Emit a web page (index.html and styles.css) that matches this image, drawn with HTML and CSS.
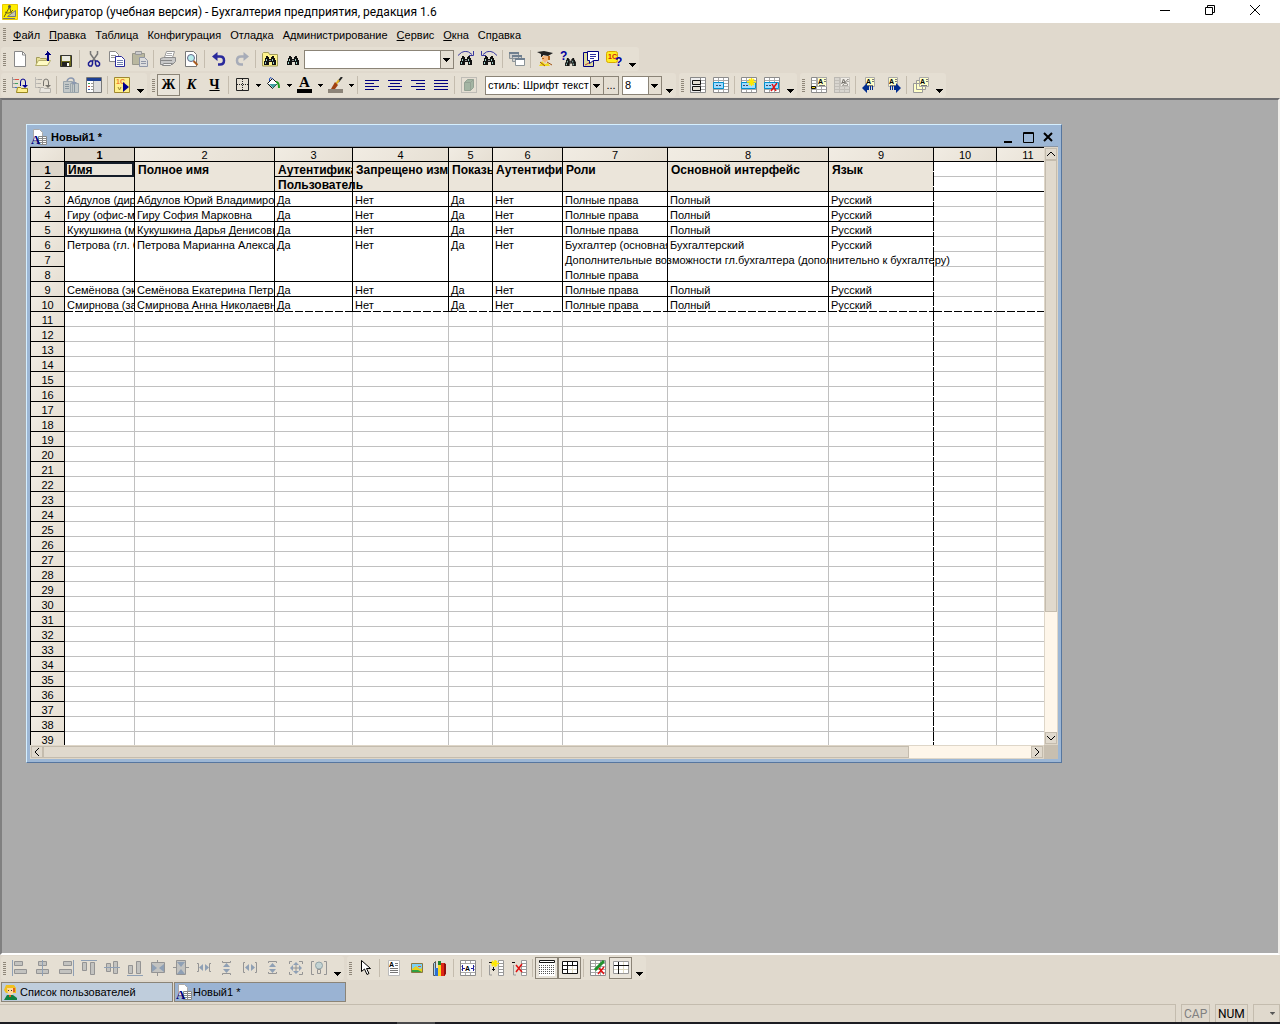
FILE: index.html
```
<!DOCTYPE html>
<html lang="ru">
<head>
    <meta charset="UTF-8">
    <meta name="viewport" content="width=device-width, initial-scale=1.0">
    <title>Конфигуратор (учебная версия)</title>
    <link rel="stylesheet" href="styles.css">
</head>
<body>
    <!-- Shared icon parts -->
    <svg class="defs" aria-hidden="true">
        <symbol id="bino" viewBox="0 0 12 10">
            <path fill="#111" d="M2 0h2v1h1v2h2V1h1V0h2v2h1v2h1v5H8V6H5v3H0V5h1V2h1z"/>
            <path fill="#9fd0c8" d="M2 3h1v2H2zM8 3h1v2H8zM1 6h1v2H1zM9 6h1v2H9z"/>
            <path fill="#888" d="M5 4h2v1H5z"/>
        </symbol>
        <symbol id="table" viewBox="0 0 16 16">
            <path fill="#fff" stroke="#8c8c8c" d="M.5.5h15v15H.5z"/>
            <path fill="none" stroke="#a8a8a8" d="M1 3.500h14M1 6.500h14M1 9.500h14M1 12.500h14M5.500 1v14M10.500 1v14"/>
        </symbol>
        <symbol id="note" viewBox="0 0 10 10">
            <path fill="#ffffc8" stroke="#aaa" d="M.5.5h9v9h-9z"/>
            <text x="1" y="7" class="tiny">A</text>
            <path fill="#777" d="M7 2h2v1H7zM7 4h2v1H7zM2 8h6v1H2z"/>
        </symbol>
        <symbol id="sheet" viewBox="0 0 16 16">
            <path fill="#fff" stroke="#aaa" d="M2.500.5h6l3 3v9h-9z"/>
            <path fill="#fff" stroke="#888" d="M7.500 7.500h8v8h-8zM7 9.500h9M7 11.500h9M7 13.500h9M11.500 8v8"/>
            <text x="0" y="15" class="serif" fill="#00007c">A</text>
        </symbol>
        <symbol id="drop" viewBox="0 0 7 4"><path d="M0 0h7v1H6v1H5v1H4v1H3V3H2V2H1V1H0z"/></symbol>
        <symbol id="tree" viewBox="0 0 16 16">
            <path fill="none" stroke="#999" d="M.5 0v11M1 2.500h2M1 6.500h2M1 10.500h2"/>
            <path fill="none" stroke="#e05040" d="M3 2.500h4"/><path fill="none" stroke="#40a060" d="M3 6.500h3"/><path fill="none" stroke="#4070d0" d="M3 10.500h2"/>
            <path fill="#ffef8c" stroke="#998820" d="M4.500 15.500l1-5h3l1 1h6v4z"/>
            <path fill="none" stroke="#000090" d="M8.500 9V5q0-3 2.500-3t2.500 3v4"/><path fill="#000090" d="M10 8h6l-3 3z"/>
        </symbol>
    </svg>

    <header class="titlebar">
        <svg class="logo" viewBox="0 0 16 16"><path fill="#ffef00" stroke="#e8c800" d="M.5.5h15v15H.5z"/><path fill="none" stroke="#665c18" d="M2 13L7.500 3l3 10M3 8q4 3 8-2"/><path fill="#c9c9b0" stroke="#777" d="M5.500 12.500l8-6v6zM1 14.500h12"/><circle cx="7.500" cy="2.500" r="1.500" fill="#555"/></svg>
        <h1>Конфигуратор (учебная версия) - Бухгалтерия предприятия, редакция 1.6</h1>
        <button class="sys" aria-label="Свернуть"><svg viewBox="0 0 10 10"><path d="M0 5.500h10"/></svg></button>
        <button class="sys" aria-label="Восстановить"><svg viewBox="0 0 10 10"><path d="M.5 2.500h7v7h-7zM2.500 2V.5h7v7H8"/></svg></button>
        <button class="sys" aria-label="Закрыть"><svg viewBox="0 0 10 10"><path d="M0 0l10 10M10 0L0 10"/></svg></button>
    </header>

    <nav class="menubar">
        <span class="grip"></span>
        <button><u>Ф</u>айл</button>
        <button><u>П</u>равка</button>
        <button>Таблица</button>
        <button>Конфигурация</button>
        <button>Отладка</button>
        <button>Администрирование</button>
        <button><u>С</u>ервис</button>
        <button><u>О</u>кна</button>
        <button>Сп<u>р</u>авка</button>
    </nav>

    <div class="toolrow">
        <div class="toolbar">
            <span class="grip"></span>
            <button aria-label="Новый"><svg class="ic" viewBox="0 0 16 16"><path fill="#fff" stroke="#888" d="M2.500.5h8l3 3v12h-11z"/><path fill="none" stroke="#888" d="M10.500 1v3h3"/></svg></button>
            <button aria-label="Открыть"><svg class="ic" viewBox="0 0 16 16"><path fill="#e6df96" stroke="#a39c5a" d="M1.500 14.500v-8h3l1 1h6v7z"/><path fill="#fffbc4" stroke="#b5ae6c" d="M.5 14.500l3-5h12l-3 5z"/><path fill="#000080" d="M12 0h1v1h1v1h1v1h1v1h-2v6h-2V4h-2V3h1V2h1V1z"/></svg></button>
            <button aria-label="Сохранить"><svg class="ic" viewBox="0 0 16 16"><path fill="#6e6b1e" stroke="#333" d="M2.500 4.500h11v11h-11z"/><path fill="#e9e9e0" d="M4 5h8v5H4z"/><path fill="#222" d="M4 11h7v4H4z"/><path fill="#fff" d="M9 12h2v3H9z"/></svg></button>
            <span class="sep"></span>
            <button aria-label="Вырезать"><svg class="ic" viewBox="0 0 16 16"><path fill="none" stroke="#777" stroke-width="1.500" d="M4.500 0v3l5 7M11.500 0v3l-5 7"/><path fill="none" stroke="#1a1a90" stroke-width="1.500" d="M6.500 10l-2 0-2 2v2l1 1h2l1-2zM9.500 10h2l2 2v2l-1 1h-2l-1-2z"/></svg></button>
            <button aria-label="Копировать"><svg class="ic" viewBox="0 0 16 16"><path fill="#fff" stroke="#888" d="M.5.5h6l3 3v7h-9z"/><path stroke="#999" d="M2 4.500h5M2 6.500h5"/><path fill="#fff" stroke="#2a2a9c" d="M6.500 5.500h6l3 3v7h-9z"/><path stroke="#7080b0" d="M8 9.500h6M8 11.500h6M8 13.500h6"/></svg></button>
            <button aria-label="Вставить"><svg class="ic" viewBox="0 0 16 16"><path fill="#b9b79f" stroke="#98978a" d="M.5 2.500h12v11H.5z"/><path fill="#ccc" stroke="#999" d="M3.500.5h6v3h-6z"/><path fill="#ddd" stroke="#9097a8" d="M7.500 6.500h5l3 3v6h-8z"/><path stroke="#9097a8" d="M9 10.500h5M9 12.500h5"/></svg></button>
            <span class="sep"></span>
            <button aria-label="Печать"><svg class="ic" viewBox="0 0 16 16"><path fill="#fff" stroke="#999" d="M4.500 6.500l2-6h8l-2 6z"/><path stroke="#aaa" d="M7 2.500h5M6 4.500h6"/><path fill="#c8c8c8" stroke="#8c8c8c" d="M.5 7.500l3-1h12v4l-3 3H.5z"/><path fill="#eee" stroke="#888" d="M1 9.500h11M3.500 12.500h9l-2 2h-8z"/></svg></button>
            <button aria-label="Просмотр"><svg class="ic" viewBox="0 0 16 16"><path fill="#fff" stroke="#777" d="M2.500.5h8l3 3v12h-11z"/><circle cx="8" cy="7" r="3.500" fill="#b8eeee" stroke="#668"/><path stroke="#a85b20" stroke-width="2" d="M10.500 10l4 4"/></svg></button>
            <span class="sep"></span>
            <button aria-label="Отменить"><svg class="ic" viewBox="0 0 16 16"><path fill="none" stroke="#2a2a9c" stroke-width="2.500" d="M4 5.500h5q4 0 4 4t-4 4H7"/><path fill="#2a2a9c" d="M1 5.500L6.500 1v9z"/></svg></button>
            <button aria-label="Вернуть"><svg class="ic" viewBox="0 0 16 16"><path fill="none" stroke="#a7acb8" stroke-width="2.500" d="M12 5.500H7q-4 0-4 4t4 4h2"/><path fill="#a7acb8" d="M15 5.500L9.500 1v9z"/></svg></button>
            <span class="sep"></span>
            <button aria-label="Глобальный поиск"><svg class="ic" viewBox="0 0 16 16"><path fill="#fff48c" stroke="#a39c5a" d="M.5 15V2.500l1-1h5l1 2h8V15z"/><use href="#bino" x="2" y="5" width="12" height="10"/></svg></button>
            <button aria-label="Найти"><svg class="ic" viewBox="0 0 16 16"><use href="#bino" x="2" y="5" width="12" height="10"/></svg></button>
            <select class="find" aria-label="Строка поиска"><option></option></select>
            <button aria-label="Найти далее"><svg class="ic" viewBox="0 0 16 16"><path fill="none" stroke="#3838a0" d="M0 4.500q7-8 14-1M15.500 0v4.500H11"/><use href="#bino" x="2" y="5" width="12" height="10"/></svg></button>
            <button aria-label="Найти назад"><svg class="ic" viewBox="0 0 16 16"><path fill="none" stroke="#3838a0" d="M16 4.500q-7-8-14-1M.5 0v4.500H5"/><use href="#bino" x="2" y="5" width="12" height="10"/></svg></button>
            <span class="sep"></span>
            <button aria-label="Окна"><svg class="ic" viewBox="0 0 16 16"><path fill="#d0d0d0" stroke="#8c9498" d="M.5 1.500h9v6h-9zM3.500 4.500h9v6h-9z"/><path fill="#708090" d="M0 1h10v2H0zM3 4h10v2H3z"/><path fill="#fff" stroke="#8c9498" d="M6.500 7.500h9v7h-9z"/><path fill="#708090" d="M6 7h10v2H6z"/></svg></button>
            <span class="sep"></span>
            <button aria-label="Синтакс-помощник"><svg class="ic" viewBox="0 0 16 16"><path fill="#222" d="M0 1l7-1 9 2-5 3-5-1v2H4V3z"/><path fill="#f5b880" d="M5 5h6v4l-3 3-3-3z"/><path fill="#b56820" d="M11 5h2v4h-2zM5 7h2v1H5z"/><path fill="#f0d820" d="M2 15l3-5 3 3 3-1 2 3z"/><path stroke="#a05010" d="M10 11l5 3M3 11l5 4"/></svg></button>
            <button aria-label="Поиск в справке"><svg class="ic" viewBox="0 0 16 16"><text x="0" y="9" class="mark">?</text><use href="#bino" x="5" y="7" width="11" height="9"/></svg></button>
            <button aria-label="Содержание справки"><svg class="ic" viewBox="0 0 16 16"><path fill="#dedb9a" stroke="#000080" d="M.5 1.500h10v14H.5z"/><path fill="#fff" stroke="#000080" d="M4.500.5h11v9h-5l-4 3v-3h-2z"/><path stroke="#3030a0" d="M7 3.500h6M7 5.500h6M7 7.500h4"/><path fill="none" stroke="#c04040" d="M2 14l4-2"/></svg></button>
            <button aria-label="О программе"><svg class="ic" viewBox="0 0 16 16"><rect x=".5" y=".5" width="11" height="11" rx="2" fill="#ffee20" stroke="#d8a800"/><text x="2" y="8" class="tiny" fill="#d02010">1С</text><text x="9" y="15" class="mark">?</text></svg></button>
            <button class="more" aria-label="Ещё"><svg viewBox="0 0 7 4"><use href="#drop"/></svg></button>
        </div>
    </div>

    <div class="toolrow">
        <div class="toolbar">
            <span class="grip"></span>
            <button aria-label="Открыть конфигурацию"><svg class="ic" viewBox="0 0 16 16"><use href="#tree"/></svg></button>
            <button aria-label="Закрыть конфигурацию"><svg class="ic dim" viewBox="0 0 16 16"><use href="#tree"/></svg></button>
            <span class="sep"></span>
            <button aria-label="Обновить базу"><svg class="ic" viewBox="0 0 16 16"><path fill="#c3c8c8" stroke="#9ba5ab" d="M.5 4.500h9v11h-9zM7.500 6.500h8v9h-8z"/><path stroke="#8b98a0" d="M2 7.500h4M2 9.500h4M2 11.500h4M11.500 7v8"/><path fill="none" stroke="#8b98b0" stroke-width="1.500" d="M4 4Q5 1 8 1t3 3v3"/><path fill="#8b98b0" d="M8 5h6l-3 3z"/></svg></button>
            <button aria-label="Окно конфигурации"><svg class="ic" viewBox="0 0 16 16"><path fill="#fff" stroke="#777" d="M.5.5h15v15H.5z"/><path fill="#1c3f94" d="M1 1h14v3H1z"/><path fill="#ddd" d="M8 4h7v11H8z"/><path stroke="#30a050" d="M2 6.500h2"/><path stroke="#d04040" d="M2 9.500h2"/><path stroke="#3060c0" d="M2 12.500h2"/><path stroke="#999" d="M5 6.500h2M5 9.500h2M5 12.500h2M7.500 4v11"/></svg></button>
            <span class="sep"></span>
            <button aria-label="Начать отладку"><svg class="ic" viewBox="0 0 16 16"><path fill="#fff08c" stroke="#a08830" d="M.5.5h15v15H.5z"/><text x="2" y="7" class="tiny" fill="#f08030">1С</text><path fill="none" stroke="#a08830" d="M4 10l1.500 3L7 10"/><path fill="#000090" d="M9 5l6 5-6 5z"/></svg></button>
            <button class="more" aria-label="Ещё"><svg viewBox="0 0 7 4"><use href="#drop"/></svg></button>
        </div>
        <div class="toolbar">
            <span class="grip"></span>
            <button class="letter on" aria-label="Жирный"><b>Ж</b></button>
            <button class="letter" aria-label="Курсив"><i>К</i></button>
            <button class="letter" aria-label="Подчёркнутый"><u>Ч</u></button>
            <span class="sep"></span>
            <button aria-label="Границы"><svg class="ic" viewBox="0 0 16 16"><path fill="none" stroke="#222" d="M1.500 1.500h12v12h-12z"/><path stroke="#222" stroke-dasharray="1 1" d="M7.500 2v11M2 7.500h11"/></svg></button>
            <button class="arrow" aria-label="Выбор границ"><svg viewBox="0 0 7 4"><use href="#drop"/></svg></button>
            <button aria-label="Цвет фона"><svg class="ic" viewBox="0 0 16 16"><path fill="#fff" stroke="#111" d="M1.500 6.500l5-5 5 5-5 5z"/><path fill="#40a0a0" d="M3 7h8l-4 4z"/><path fill="none" stroke="#2050c0" d="M3.500 4V1.500L5 .5l2 2"/><path fill="none" stroke="#20a020" stroke-width="2" d="M10 5q3 0 3 6"/></svg></button>
            <button class="arrow" aria-label="Выбор цвета фона"><svg viewBox="0 0 7 4"><use href="#drop"/></svg></button>
            <button aria-label="Цвет текста"><svg class="ic" viewBox="0 0 16 16"><text x="2" y="10" class="serif big">A</text><path d="M0 12h15v4H0z"/></svg></button>
            <button class="arrow" aria-label="Выбор цвета текста"><svg viewBox="0 0 7 4"><use href="#drop"/></svg></button>
            <button aria-label="Цвет рамки"><svg class="ic" viewBox="0 0 16 16"><path fill="#8c8479" d="M0 12h15v4H0z"/><path stroke="#222" stroke-width="2" d="M14 0l-4 5"/><path stroke="#e0b020" stroke-width="2" d="M11 3L8 7"/><path fill="#a04010" d="M7 5l3 3-3 4H3z"/></svg></button>
            <button class="arrow" aria-label="Выбор цвета рамки"><svg viewBox="0 0 7 4"><use href="#drop"/></svg></button>
            <span class="sep"></span>
            <button aria-label="По левому краю"><svg class="ic lines" viewBox="0 0 16 16"><path d="M1 3.500h14M1 6.500h9M1 9.500h14M1 12.500h9"/></svg></button>
            <button aria-label="По центру"><svg class="ic lines" viewBox="0 0 16 16"><path d="M1 3.500h14M3 6.500h10M1 9.500h14M3 12.500h10"/></svg></button>
            <button aria-label="По правому краю"><svg class="ic lines" viewBox="0 0 16 16"><path d="M1 3.500h14M6 6.500h9M1 9.500h14M6 12.500h9"/></svg></button>
            <button aria-label="По ширине"><svg class="ic lines" viewBox="0 0 16 16"><path d="M1 3.500h14M1 6.500h14M1 9.500h14M1 12.500h14"/></svg></button>
            <span class="sep"></span>
            <button aria-label="Объект"><svg class="ic" viewBox="0 0 16 16"><path fill="none" stroke="#999" stroke-dasharray="1 1" d="M.5.5h15v15H.5z"/><path fill="#a3b5a3" stroke="#94a294" d="M3.500 5.500l3-3h6v8l-3 3h-6zM3.500 5.500h6v8M9.500 5.500l3-3"/></svg></button>
            <select class="style" aria-label="Шрифт"><option>стиль: Шрифт текст</option></select>
            <button class="dots" aria-label="Выбрать шрифт">...</button>
            <select class="size" aria-label="Размер"><option>8</option></select>
            <button class="more" aria-label="Ещё"><svg viewBox="0 0 7 4"><use href="#drop"/></svg></button>
        </div>
        <div class="toolbar">
            <span class="grip"></span>
            <button aria-label="Объединить"><svg class="ic" viewBox="0 0 16 16"><use href="#table"/><path fill="#eee" stroke="#888" d="M.5.5h10v15H.5z"/><path fill="#e5dfd3" stroke="#111" d="M2.500 3.500h8v4h-8zM2.500 9.500h8v4h-8z"/></svg></button>
            <button aria-label="Имя области"><svg class="ic" viewBox="0 0 16 16"><use href="#table"/><path fill="#a0dcff" stroke="#0090d0" d="M.5 5.500h10v6H.5z"/><path stroke="#446" stroke-dasharray="2 1" d="M3 8.500h5"/></svg></button>
            <span class="sep"></span>
            <button aria-label="Добавить область"><svg class="ic" viewBox="0 0 16 16"><use href="#table"/><path fill="#a0dcff" stroke="#0090d0" d="M.5 5.500h14v6H.5z"/><path stroke="#446" stroke-dasharray="2 1" d="M2 8.500h6"/><path stroke="#ffe800" stroke-width="1.500" d="M10.500 1v8M6 5h9M8 2l5 6M13 2L8 8"/></svg></button>
            <button aria-label="Удалить область"><svg class="ic" viewBox="0 0 16 16"><use href="#table"/><path fill="#a0dcff" stroke="#0090d0" d="M.5 5.500h14v6H.5z"/><path stroke="#446" stroke-dasharray="2 1" d="M2 8.500h6"/><path stroke="#e01010" stroke-width="1.500" d="M8 7l4 7M13 6l-6 8"/></svg></button>
            <button class="more" aria-label="Ещё"><svg viewBox="0 0 7 4"><use href="#drop"/></svg></button>
        </div>
        <div class="toolbar">
            <span class="grip"></span>
            <button aria-label="Примечание"><svg class="ic" viewBox="0 0 16 16"><use href="#table"/><use href="#note" x="6" y="0" width="10" height="10"/><path fill="#f8e020" stroke="#111" d="M.5 9.500h4v2h-4z"/></svg></button>
            <button aria-label="Удалить примечание"><svg class="ic dim" viewBox="0 0 16 16"><path fill="#999" d="M0 0h16v16H0z"/><use href="#table" opacity=".5"/><use href="#note" x="6" y="0" width="10" height="10"/><path stroke="#a02020" d="M9 2l5 6M14 2L9 8"/></svg></button>
            <span class="sep"></span>
            <button aria-label="Предыдущее примечание"><svg class="ic" viewBox="0 0 16 16"><use href="#note" x="3" y="0" width="10" height="10"/><path fill="#002d90" d="M0 11l5-5v3h2v4H5v3zM8 9h1v4H8zM10 9h1v4h-1z"/></svg></button>
            <button aria-label="Следующее примечание"><svg class="ic" viewBox="0 0 16 16"><use href="#note" x="3" y="0" width="10" height="10"/><path fill="#002d90" d="M16 11l-5-5v3H9v4h2v3zM5 9h1v4H5zM7 9h1v4H7z"/></svg></button>
            <span class="sep"></span>
            <button aria-label="Все примечания"><svg class="ic" viewBox="0 0 16 16"><path fill="#ffffc8" stroke="#999" d="M.5 6.500h9v9h-9zM3.500 3.500h9v9h-9z"/><use href="#note" x="6" y="0" width="10" height="10"/></svg></button>
            <button class="more" aria-label="Ещё"><svg viewBox="0 0 7 4"><use href="#drop"/></svg></button>
        </div>
    </div>

    <main class="workspace">
        <section class="window">
            <div class="caption">
                <svg class="ic" viewBox="0 0 16 16"><use href="#sheet"/></svg>
                <h2>Новый1 *</h2>
                <button aria-label="Свернуть окно"><svg viewBox="0 0 11 11"><path d="M1 10h8"/></svg></button>
                <button aria-label="Развернуть окно"><svg viewBox="0 0 11 11" class="thin"><path d="M.5.5h10v10H.5zM0 1.500h11"/></svg></button>
                <button aria-label="Закрыть окно"><svg viewBox="0 0 11 11"><path d="M1 1l8 8M9 1L1 9"/></svg></button>
            </div>
            <div class="pane">
                <table class="sheet">
                    <colgroup>
                        <col class="w35"><col class="w70"><col class="w140"><col class="w78"><col class="w96"><col class="w44">
                        <col class="w70"><col class="w105"><col class="w161"><col class="w105"><col class="w63"><col class="w63">
                    </colgroup>
                    <thead>
                        <tr><th></th><th class="cur">1</th><th>2</th><th>3</th><th>4</th><th>5</th><th>6</th><th>7</th><th>8</th><th>9</th><th>10</th><th>11</th></tr>
                    </thead>
                    <tbody id="rows">
                        <tr class="head"><th class="cur">1</th><td class="active">Имя</td><td>Полное имя</td><td class="line">Аутентификация</td><td>Запрещено изменять</td><td>Показывать</td><td>Аутентификация</td><td>Роли</td><td>Основной интерфейс</td><td>Язык</td><td></td><td></td></tr>
                        <tr class="head last"><th>2</th><td></td><td></td><td class="spill">Пользователь</td><td></td><td></td><td></td><td></td><td></td><td></td><td></td><td></td></tr>
                        <tr class="data"><th>3</th><td>Абдулов (директор)</td><td>Абдулов Юрий Владимирович</td><td>Да</td><td>Нет</td><td>Да</td><td>Нет</td><td>Полные права</td><td>Полный</td><td>Русский</td><td></td><td></td></tr>
                        <tr class="data"><th>4</th><td>Гиру (офис-менеджер)</td><td>Гиру София Марковна</td><td>Да</td><td>Нет</td><td>Да</td><td>Нет</td><td>Полные права</td><td>Полный</td><td>Русский</td><td></td><td></td></tr>
                        <tr class="data"><th>5</th><td>Кукушкина (менеджер)</td><td>Кукушкина Дарья Денисовна</td><td>Да</td><td>Нет</td><td>Да</td><td>Нет</td><td>Полные права</td><td>Полный</td><td>Русский</td><td></td><td></td></tr>
                        <tr class="data open"><th>6</th><td>Петрова (гл. бухгалтер)</td><td>Петрова Марианна Александровна</td><td>Да</td><td>Нет</td><td>Да</td><td>Нет</td><td>Бухгалтер (основная)</td><td>Бухгалтерский</td><td>Русский</td><td></td><td></td></tr>
                        <tr class="data open"><th>7</th><td></td><td></td><td></td><td></td><td></td><td></td><td class="spill">Дополнительные возможности гл.бухгалтера (дополнительно к бухгалтеру)</td><td></td><td></td><td></td><td></td></tr>
                        <tr class="data"><th>8</th><td></td><td></td><td></td><td></td><td></td><td></td><td>Полные права</td><td></td><td></td><td></td><td></td></tr>
                        <tr class="data"><th>9</th><td>Семёнова (экономист)</td><td>Семёнова Екатерина Петровна</td><td>Да</td><td>Нет</td><td>Да</td><td>Нет</td><td>Полные права</td><td>Полный</td><td>Русский</td><td></td><td></td></tr>
                        <tr class="data end"><th>10</th><td>Смирнова (зам.)</td><td>Смирнова Анна Николаевна</td><td>Да</td><td>Нет</td><td>Да</td><td>Нет</td><td>Полные права</td><td>Полный</td><td>Русский</td><td></td><td></td></tr>
                    </tbody>
                </table>
            </div>
            <div class="vscroll">
                <button aria-label="Вверх"><svg viewBox="0 0 8 8"><path d="M0 6l4-4 4 4"/></svg></button>
                <span class="thumb"></span>
                <span class="rest"></span>
                <button aria-label="Вниз"><svg viewBox="0 0 8 8"><path d="M0 2l4 4 4-4"/></svg></button>
            </div>
            <div class="hscroll">
                <button aria-label="Влево"><svg viewBox="0 0 8 8"><path d="M6 0L2 4l4 4"/></svg></button>
                <span class="thumb"></span>
                <span class="rest"></span>
                <button aria-label="Вправо"><svg viewBox="0 0 8 8"><path d="M2 0l4 4-4 4"/></svg></button>
            </div>
            <div class="corner"></div>
        </section>
    </main>

    <div class="toolrow">
        <div class="toolbar off">
            <span class="grip"></span>
            <button aria-label="Выровнять влево"><svg class="ic" viewBox="0 0 16 16"><path class="b" d="M.5 0v16"/><path d="M2.500 1.500h8v4h-8zM2.500 9.500h12v4h-12z"/></svg></button>
            <button aria-label="Выровнять по вертикальной оси"><svg class="ic" viewBox="0 0 16 16"><path d="M3.500 1.500h8v4h-8zM1.500 9.500h12v4h-12z"/><path class="b" d="M7.500 0v16"/></svg></button>
            <button aria-label="Выровнять вправо"><svg class="ic" viewBox="0 0 16 16"><path class="b" d="M15.500 0v16"/><path d="M5.500 1.500h8v4h-8zM1.500 9.500h12v4h-12z"/></svg></button>
            <button aria-label="Выровнять вверх"><svg class="ic" viewBox="0 0 16 16"><path class="b" d="M0 .5h16"/><path d="M1.500 2.500h4v8h-4zM9.500 2.500h4v12h-4z"/></svg></button>
            <button aria-label="Выровнять по горизонтальной оси"><svg class="ic" viewBox="0 0 16 16"><path d="M2.500 3.500h4v8h-4zM9.500 1.500h4v12h-4z"/><path class="b" d="M0 7.500h16"/></svg></button>
            <button aria-label="Выровнять вниз"><svg class="ic" viewBox="0 0 16 16"><path class="b" d="M0 15.500h16"/><path d="M1.500 5.500h4v8h-4zM9.500 1.500h4v12h-4z"/></svg></button>
            <button aria-label="Центрировать по горизонтали"><svg class="ic" viewBox="0 0 16 16"><path d="M1.500 2.500h13v10h-13zM7.500 0v2M7.500 13v3"/><path class="f" d="M2 4l5 4-5 4zM14 4L9 8l5 4z"/></svg></button>
            <button aria-label="Центрировать по вертикали"><svg class="ic" viewBox="0 0 16 16"><path d="M3.500.5h9v14h-9zM0 7.500h3M13 7.500h3"/><path class="f" d="M4 2h8L8 7zM4 14h8L8 9z"/></svg></button>
            <button aria-label="Промежутки по горизонтали"><svg class="ic" viewBox="0 0 16 16"><path class="n" d="M1 3.500h1.500v8H1M15 3.500h-1.500v8H15"/><path class="f" d="M3 7.500L7 4v7zM13 7.500L9 4v7z"/></svg></button>
            <button aria-label="Промежутки по вертикали"><svg class="ic" viewBox="0 0 16 16"><path class="n" d="M3.500 1v1.500h8V1M3.500 15v-1.500h8V15"/><path class="f" d="M7.500 3L11 7H4zM7.500 13L11 9H4z"/></svg></button>
            <button aria-label="Одинаковая ширина"><svg class="ic" viewBox="0 0 16 16"><path class="n" d="M3 2.500H1.500v10H3M13 2.500h1.500v10H13"/><path class="f" d="M3 7.500L7 4v7zM13 7.500L9 4v7z"/></svg></button>
            <button aria-label="Одинаковая высота"><svg class="ic" viewBox="0 0 16 16"><path class="n" d="M3.500 3V1.500h8V3M3.500 12v1.500h8V12"/><path class="f" d="M7.500 3L11 7H4zM7.500 13L11 9H4z"/></svg></button>
            <button aria-label="Одинаковый размер"><svg class="ic" viewBox="0 0 16 16"><path class="n" d="M4 1.500H1.500V4M11 1.500h3.500V4M4 14.500H1.500V12M11 14.500h3.500V12M8 3v10M3 8h10"/><path class="f" d="M8 2l3 3H5zM8 14l3-3H5zM2 8l3-3v6zM14 8l-3-3v6z"/></svg></button>
            <button aria-label="Авторазмер"><svg class="ic" viewBox="0 0 16 16"><path class="n" d="M3 1.500H.5v13H3M13 1.500h2.500v13H13"/><circle cx="8" cy="5.500" r="3.500" fill="#c3d3d3" stroke="#91a3a8"/><path class="n" d="M6.500 9.500h3v4h-3z"/></svg></button>
            <button class="more" aria-label="Ещё"><svg viewBox="0 0 7 4"><use href="#drop"/></svg></button>
        </div>
        <div class="toolbar">
            <span class="grip"></span>
            <button aria-label="Выделение"><svg class="ic" viewBox="0 0 16 16"><path fill="#fff" stroke="#000" d="M3.500.5v11l3-2.500 2.500 5.500 2-1-2.500-5h4z"/></svg></button>
            <span class="sep"></span>
            <button aria-label="Текст"><svg class="ic" viewBox="0 0 16 16"><path fill="#fff" stroke="#bbb" d="M2.500.5h11v15h-11z"/><text x="3" y="7" class="tiny">A</text><path stroke="#777" d="M9 3.500h3M9 5.500h3M4 8.500h8M4 10.500h8M4 12.500h8"/></svg></button>
            <button aria-label="Картинка"><svg class="ic" viewBox="0 0 16 16"><path fill="#78d0f8" stroke="#8a7840" d="M2.500 3.500h11v9h-11z"/><path fill="#e8d020" d="M3 9l4-3 4 3 2-1v4H3z"/><path fill="#30a040" d="M3 10h6l4 2H3z"/><path stroke="#e06020" d="M9 6.500h3"/></svg></button>
            <button aria-label="Диаграмма"><svg class="ic" viewBox="0 0 16 16"><path fill="#a0d0f0" stroke="#555" d="M1.500 3.500l2-2v14h-2z"/><path fill="#3070d0" d="M3 8h3v8H3z"/><path fill="#f8d820" d="M6 4h3v12H6z"/><path fill="#208030" d="M6 1h3v4H6z"/><path fill="#e02818" d="M9 3h4v13H9z"/><path fill="#901010" d="M12 3l2 1v10l-2 2z"/></svg></button>
            <span class="sep"></span>
            <button aria-label="Поле"><svg class="ic" viewBox="0 0 16 16"><use href="#table"/><path fill="#fff" d="M2 4h12v8H2z"/><path stroke="#2020a0" d="M2.500 5v6M13.500 5v6M3 8.500h2M11 8.500h2"/><text x="5" y="11" class="tiny">A</text></svg></button>
            <span class="sep"></span>
            <button aria-label="Добавить группу"><svg class="ic" viewBox="0 0 16 16"><path fill="#fff" stroke="#999" d="M10.500.5h5v15h-5zM10 3.500h6M10 6.500h6M10 9.500h6M10 12.500h6"/><path fill="none" stroke="#111" d="M1 2.500h3M5.500 7v4M4 9.500h3"/><path fill="none" stroke="#999" d="M1.500 5v10H4"/><path stroke="#ffe800" stroke-width="1.500" d="M7 0v7M3 3.500h8M4 1l5 5M9 1L4 6"/></svg></button>
            <button aria-label="Удалить группу"><svg class="ic" viewBox="0 0 16 16"><path fill="#fff" stroke="#999" d="M10.500.5h5v15h-5zM10 3.500h6M10 6.500h6M10 9.500h6M10 12.500h6"/><path fill="none" stroke="#111" d="M1 2.500h3"/><path fill="none" stroke="#999" d="M2.500 5v10H5"/><path stroke="#e01010" stroke-width="1.500" d="M5 5l6 7M11 4l-6 8"/></svg></button>
            <span class="sep"></span>
            <button class="on" aria-label="Сетка"><svg class="ic" viewBox="0 0 16 16"><path fill="#fff" d="M0 0h16v16H0z"/><path fill="#fff" stroke="#111" d="M.5.5h15v2H.5z"/><path stroke="#555" stroke-dasharray="1 1" d="M0 5.500h16M0 7.500h16M0 9.500h16M0 11.500h16M0 13.500h16"/></svg></button>
            <button class="on" aria-label="Заголовки"><svg class="ic" viewBox="0 0 16 16"><path fill="#fff" stroke="#111" d="M.5 1.500h15v12H.5zM.5 5.500h15M5.500 2v12M10.500 2v4M1 9.500h5"/><path stroke="#ddd8c0" d="M6 9.500h9M10.500 6v7"/></svg></button>
            <span class="sep"></span>
            <button aria-label="Только просмотр"><svg class="ic" viewBox="0 0 16 16"><use href="#table"/><path stroke="#20902c" stroke-width="3" d="M14 1L5 10"/><path stroke="#e01010" stroke-width="1.500" d="M9 8l5 6M14 7l-6 7"/></svg></button>
            <button class="on" aria-label="Фиксация"><svg class="ic" viewBox="0 0 16 16"><path fill="#fff" stroke="#999" d="M.5 1.500h15v12H.5z"/><path stroke="#ddd8c0" d="M1 9.500h14M10.500 2v11"/><path stroke="#111" d="M1 5.500h15M5.500 2v12"/></svg></button>
            <button class="more" aria-label="Ещё"><svg viewBox="0 0 7 4"><use href="#drop"/></svg></button>
        </div>
    </div>

    <div class="tabs">
        <button><svg class="ic" viewBox="0 0 16 16"><path fill="#f0c020" d="M3 1h8l2 3v5H3L1 6z"/><path fill="#ffd8a0" d="M4 4h6v6l-2 1-3-1z"/><path fill="#333" d="M5 6h1v1H5zM8 6h1v1H8z"/><path fill="#108040" d="M1 16l3-5h6l4 3v2z"/><path fill="#e06020" d="M10 4h2v4h-2zM6 11h2v2H6z"/></svg>Список пользователей</button>
        <button class="current"><svg class="ic" viewBox="0 0 16 16"><use href="#sheet"/></svg>Новый1 *</button>
    </div>

    <footer class="status">
        <span class="msg"></span>
        <span class="cap">CAP</span>
        <span class="num">NUM</span>
        <button aria-label="Язык ввода"><svg viewBox="0 0 7 4"><use href="#drop"/></svg></button>
    </footer>
    <div class="taskbar"></div>

    <script>
        // Fill the rest of the sheet with empty rows
        const body = document.getElementById('rows');
        for (let n = 11; n <= 39; n++) {
            const row = body.insertRow();
            row.innerHTML = `<th>${n}</th>` + '<td></td>'.repeat(11);
        }
    </script>
</body>
</html>
```
FILE: styles.css
```
* {
    box-sizing: border-box;
}
body {
    margin: 0;
    height: 100vh;
    display: flex;
    flex-direction: column;
    overflow: hidden;
    background-color: #e0d9cd;
    color: #000;
    font-family: "Liberation Sans", Arial, sans-serif;
    font-size: 11px;
}
button, select {
    font: inherit;
    color: inherit;
    margin: 0;
    padding: 0;
    border: 0;
    background: none;
}
h1, h2 {
    margin: 0;
    flex: 1;
}
svg {
    flex: none;
    display: block;
}
.defs {
    position: absolute;
    width: 0;
    height: 0;
}
.ic {
    width: 16px;
    height: 16px;
}
.dim {
    opacity: 0.5;
    filter: grayscale(1);
}
/* letters inside icons */
.tiny {
    font: bold 7px "Liberation Sans", sans-serif;
}
.serif {
    font: bold 13px "Liberation Serif", serif;
}
.big {
    font-size: 15px;
}
.mark {
    font: bold 12px "Liberation Sans", sans-serif;
    fill: #0000a0;
}

/* title bar */
.titlebar {
    display: flex;
    align-items: center;
    height: 23px;
    flex: none;
    background-color: #fff;
    padding: 0 3px 0 2px;
}
.logo {
    width: 16px;
    height: 16px;
    margin-right: 5px;
}
.titlebar h1 {
    font-family: Roboto, "Open Sans", sans-serif;
    font-size: 12px;
    font-weight: normal;
}
.sys {
    width: 45px;
    height: 20px;
    display: flex;
    align-items: center;
    justify-content: center;
    align-self: flex-start;
}
.sys svg {
    width: 10px;
    height: 10px;
    fill: none;
    stroke: #000;
}

/* menu and toolbars */
.grip {
    width: 3px;
    height: 13px;
    margin: 0 2px;
    flex: none;
    background: repeating-linear-gradient(#8f877a 0 1px, transparent 1px 2px);
}
.menubar {
    display: flex;
    align-items: center;
    height: 23px;
    flex: none;
    padding-left: 1px;
}
.menubar button {
    padding: 0 4px 0 5px;
    line-height: 22px;
}
.toolrow {
    display: flex;
    align-items: center;
    gap: 3px;
    height: 26px;
    flex: none;
    padding-left: 1px;
}
.toolbar {
    display: flex;
    align-items: center;
    height: 24px;
    background-color: #e5dfd3;
    border-radius: 3px;
}
.toolbar button {
    width: 23px;
    height: 22px;
    display: flex;
    align-items: center;
    justify-content: center;
    flex: none;
}
.toolbar .on {
    border: 1px solid #8b8477;
    background-color: #e9e4da;
}
.toolbar .sep {
    width: 1px;
    height: 18px;
    margin: 0 2px;
    background-color: #c4bcae;
}
.toolbar .arrow {
    width: 8px;
}
.arrow svg {
    width: 5px;
    height: 3px;
    shape-rendering: crispEdges;
}
.toolbar .more {
    width: 14px;
    align-items: flex-end;
    padding-bottom: 3px;
}
.more svg {
    width: 7px;
    height: 4px;
    shape-rendering: crispEdges;
}
.toolbar .letter {
    font-family: "Liberation Serif", serif;
    font-size: 14px;
    font-weight: bold;
}
.lines {
    stroke: #000080;
}
.off svg path {
    fill: #c3c3c0;
    stroke: #949494;
}
.off svg .b {
    stroke: #8fa0b5;
}
.off svg .f {
    fill: #8fa0b5;
    stroke: none;
}
.off svg .n {
    fill: none;
}
select {
    appearance: none;
    height: 19px;
    border: 1px solid #8b8477;
    border-radius: 0;
    padding: 0 14px 0 2px;
    background: #fff url("data:image/svg+xml,%3Csvg xmlns='http://www.w3.org/2000/svg' width='13' height='17' shape-rendering='crispEdges'%3E%3Cpath fill='%23e5dfd3' d='M0 0h13v17H0z'/%3E%3Cpath fill='%238b8477' d='M0 0h1v17H0z'/%3E%3Cpath d='M3 7h7v1H9v1H8v1H7v1H6v-1H5V9H4V8H3z'/%3E%3C/svg%3E") no-repeat right center;
}
.find {
    width: 150px;
}
.style {
    width: 119px;
    margin-left: 5px;
}
.size {
    width: 40px;
    margin-left: 3px;
}
.toolbar .dots {
    width: 15px;
    height: 19px;
    border: 1px solid #8b8477;
    border-left: 0;
}

/* document area */
.workspace {
    flex: 1;
    min-height: 0;
    position: relative;
    background-color: #ababab;
    border: 2px solid #808080;
    border-top-color: #6e6e70;
    border-right-color: #f0eeea;
    border-bottom-color: #fff;
}
.window {
    position: absolute;
    left: 24px;
    top: 24px;
    right: 216px;
    bottom: 190px;
    display: grid;
    grid-template-columns: minmax(0, 1fr) 14px;
    grid-template-rows: 19px minmax(0, 1fr) 14px;
    padding: 3px;
    background-color: #9db7d5;
    border: 1px solid #56769f;
    border-top-color: #d5efff;
    border-left-color: #d5efff;
}
.caption {
    grid-column: 1 / 3;
    display: flex;
    align-items: center;
    padding-left: 1px;
    border-bottom: 1px solid #8a96a5;
}
.caption h2 {
    font-size: 11px;
    padding-left: 4px;
}
.caption button {
    width: 20px;
    display: flex;
    justify-content: center;
}
.caption button svg {
    width: 11px;
    height: 11px;
    fill: none;
    stroke: #000;
    stroke-width: 2px;
}
.caption .thin {
    stroke-width: 1px;
}
.pane {
    overflow: hidden;
    background-color: #fff;
}

/* spreadsheet */
.sheet {
    table-layout: fixed;
    width: 1030px;
    border-collapse: separate;
    border-spacing: 0;
}
.w35 { width: 35px; }
.w44 { width: 44px; }
.w63 { width: 63px; }
.w70 { width: 70px; }
.w78 { width: 78px; }
.w96 { width: 96px; }
.w105 { width: 105px; }
.w140 { width: 140px; }
.w161 { width: 161px; }
.sheet th, .sheet td {
    height: 15px;
    padding: 2px 0 0;
    line-height: 12px;
    vertical-align: top;
    white-space: nowrap;
    overflow: hidden;
    border: 0 solid #c0c0c0;
    border-width: 0 1px 1px 0;
}
.sheet th {
    font-weight: normal;
    text-align: center;
    border-color: #000;
    background: linear-gradient(135deg, #f1ece3, #e6dfd3);
}
.sheet th:first-child {
    border-left-width: 1px;
}
.sheet thead th {
    border-top-width: 1px;
    line-height: 11px;
}
.sheet .cur {
    font-weight: bold;
    background: #ddd6ca;
}
.sheet td {
    padding-left: 2px;
}
.sheet .spill {
    overflow: visible;
}
.head td, .data td {
    border-color: #000;
}
.sheet .head td {
    font-size: 12px;
    font-weight: bold;
    padding-left: 3px;
    background-color: #ebe5da;
}
.sheet .head td, .sheet .open td {
    border-bottom-width: 0;
}
.sheet .head .line, .sheet .last td {
    border-bottom: 1px solid #000;
}
.sheet tr td:nth-child(n+11) {
    background-color: #fff;
    border-color: #c0c0c0;
    border-bottom-width: 1px;
}
.sheet .last td:nth-child(n+11) {
    border-bottom-color: #000;
}
.head .active {
    box-shadow: inset 0 0 0 2px #141c28;
}
/* print area edges */
.sheet td:nth-child(10) {
    border-right-color: transparent;
    background: repeating-linear-gradient(#000 0 9px, #fff 9px 10px) right / 1px 100% no-repeat border-box;
}
.sheet .head td:nth-child(10) {
    background-color: #ebe5da;
}
.sheet .end td:nth-child(n+1) {
    border-bottom-color: transparent;
    background: repeating-linear-gradient(to right, #000 0 8px, #fff 8px 10px) bottom / 100% 1px no-repeat border-box;
}
.sheet .end td:nth-child(10) {
    background:
        repeating-linear-gradient(#000 0 9px, #fff 9px 10px) right / 1px 100% no-repeat border-box,
        repeating-linear-gradient(to right, #000 0 8px, #fff 8px 10px) bottom / 100% 1px no-repeat border-box;
}

/* scroll bars */
.vscroll, .hscroll {
    display: flex;
    background-color: #fef6ea;
    border: 1px solid #ded6c8;
}
.vscroll {
    flex-direction: column;
}
.vscroll button, .hscroll button {
    width: 12px;
    height: 12px;
    flex: none;
    display: flex;
    align-items: center;
    justify-content: center;
    border: 1px solid #c4bcae;
    background-color: #e0d9cd;
}
.vscroll button svg, .hscroll button svg {
    width: 8px;
    height: 8px;
    fill: none;
    stroke: #000;
}
.thumb {
    border: 1px solid #c4bcae;
    background-color: #e0d9cd;
}
.vscroll .thumb {
    flex: 79;
}
.vscroll .rest {
    flex: 21;
}
.hscroll .thumb {
    flex: 876;
}
.hscroll .rest {
    flex: 124;
}
.corner {
    background-color: #c8bfb0;
}

/* open windows and status */
.tabs {
    display: flex;
    gap: 1px;
    padding: 1px;
    flex: none;
}
.tabs button {
    width: 172px;
    height: 20px;
    display: flex;
    align-items: center;
    gap: 1px;
    padding-left: 1px;
    border: 1px solid #8b8477;
    background-color: #bfcddc;
}
.tabs .current {
    background-color: #9ab3d3;
}
.status {
    display: flex;
    gap: 5px;
    height: 19px;
    padding-top: 1px;
    flex: none;
    font-family: Roboto, "Open Sans", sans-serif;
    font-size: 12px;
    line-height: 18px;
}
.status span, .status button {
    border: 1px solid #c4bcae;
    border-bottom: 0;
    padding: 0 2px;
}
.status .msg {
    flex: 1;
    border-left: 0;
}
.status .cap {
    width: 29px;
    color: #808080;
}
.status .num {
    width: 33px;
}
.status button {
    width: 27px;
    display: flex;
    align-items: center;
    justify-content: flex-end;
    padding-right: 4px;
}
.status button svg {
    width: 5px;
    height: 3px;
    fill: #555;
}
.taskbar {
    height: 2px;
    flex: none;
    background: linear-gradient(to right, #1c1c22 31%, #4a4a4c 31% 34%, #1c1c22 34%);
}
```
